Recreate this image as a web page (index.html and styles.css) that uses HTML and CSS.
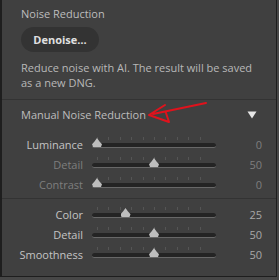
FILE: index.html
```html
<!DOCTYPE html>
<html>
<head>
    <title>Noise Reduction</title>
    <meta name="viewport" content="width=device-width, initial-scale=1">
    <link rel="stylesheet" href="styles.css">
</head>
<body>
    <div class="panel">
        <!-- AI denoise -->
        <div class="section top">
            <div class="head">Noise Reduction</div>
            <button class="denoise" type="button">Denoise…</button>
            <p class="note">Reduce noise with AI. The result will be saved as a new DNG.</p>
        </div>

        <!-- Manual noise reduction -->
        <div class="section manual">
            <div class="head-row">
                <span class="head">Manual Noise Reduction</span>
                <svg class="caret" width="10" height="8" viewBox="0 0 10 8"><polygon points="0.5,0.5 9.5,0.5 5,7.5" fill="#e6e6e6"/></svg>
            </div>
            <svg class="arrow" width="75" height="30" viewBox="0 0 75 30">
                <path d="M66 4 L13 15 M25 6 L9 16 L29 23 L26 14" fill="none" stroke="#e0121c" stroke-width="2" stroke-linecap="round" stroke-linejoin="round"/>
            </svg>
            <div class="rows">
                <div class="row"><span class="label">Luminance</span><div class="track"><span class="thumb" style="--v:0"></span></div><span class="val dim">0</span></div>
                <div class="row dim"><span class="label">Detail</span><div class="track"><span class="thumb" style="--v:0.5"></span></div><span class="val">50</span></div>
                <div class="row dim"><span class="label">Contrast</span><div class="track"><span class="thumb" style="--v:0"></span></div><span class="val">0</span></div>
            </div>
        </div>

        <div class="section color">
            <div class="rows">
                <div class="row"><span class="label">Color</span><div class="track"><span class="thumb" style="--v:0.25"></span></div><span class="val">25</span></div>
                <div class="row"><span class="label">Detail</span><div class="track"><span class="thumb" style="--v:0.5"></span></div><span class="val">50</span></div>
                <div class="row"><span class="label">Smoothness</span><div class="track"><span class="thumb" style="--v:0.5"></span></div><span class="val">50</span></div>
            </div>
        </div>
    </div>
</body>
</html>
```

FILE: styles.css
```css
body { margin:0; background:#474747; font-family:"Open Sans","Noto Sans",sans-serif; font-size:11px; }
.panel { width:277px; height:277px; box-sizing:border-box; background:#404040; border-left:2px solid #1e1e1e; border-right:1px solid #1e1e1e; border-bottom:1px solid #1e1e1e; }
.section { padding:0 0 0 19px; border-bottom:1px solid #333; position:relative; }
.section.color { border-bottom:none; padding-top:5px; }
.head { color:#bdbdbd; line-height:15px; display:block; }
.top { padding-top:6px; padding-bottom:9px; }
.denoise { display:block; margin:6px 0 0 0; width:78px; height:25px; border:none; border-radius:13px; background:#333; color:#e0e0e0; font-family:inherit; font-size:11px; font-weight:bold; padding:0; }
.note { margin:8px 0 0 0; color:#b8b8b8; line-height:15px; width:240px; }
.manual { padding-top:7px; padding-bottom:4px; }
.head-row { display:flex; align-items:center; justify-content:space-between; padding-right:19px; }
.caret { display:block; }
.arrow { position:absolute; left:138px; top:-1px; }
.rows { display:flex; flex-direction:column; }
.manual .rows { margin-top:12px; }
.row { display:grid; grid-template-columns:79px 124px 37px; column-gap:9px; align-items:center; height:20px; margin-left:-19px; padding-left:2px; color:#c4c4c4; }
.row .label { text-align:right; }
.row .val { text-align:right; color:#a8a8a8; }
.row.dim .label, .row.dim .val, .val.dim { color:#7e7e7e; }
.track { position:relative; height:4px; background:#242424; border-radius:3px; border-bottom:1px solid #686868; margin-top:3px; }
.track::before { content:""; position:absolute; left:5px; right:5px; top:-6px; height:3px;
    background:repeating-linear-gradient(90deg, #555 0 1px, transparent 1px 11.4px); }
.thumb { position:absolute; top:-5px; left:calc(5px + (100% - 10px) * var(--v)); width:10px; height:9px; margin-left:-5px; background:#bdbdbd;
    clip-path:polygon(50% 0, 75% 40%, 100% 70%, 90% 100%, 10% 100%, 0 70%, 25% 40%); }
```
